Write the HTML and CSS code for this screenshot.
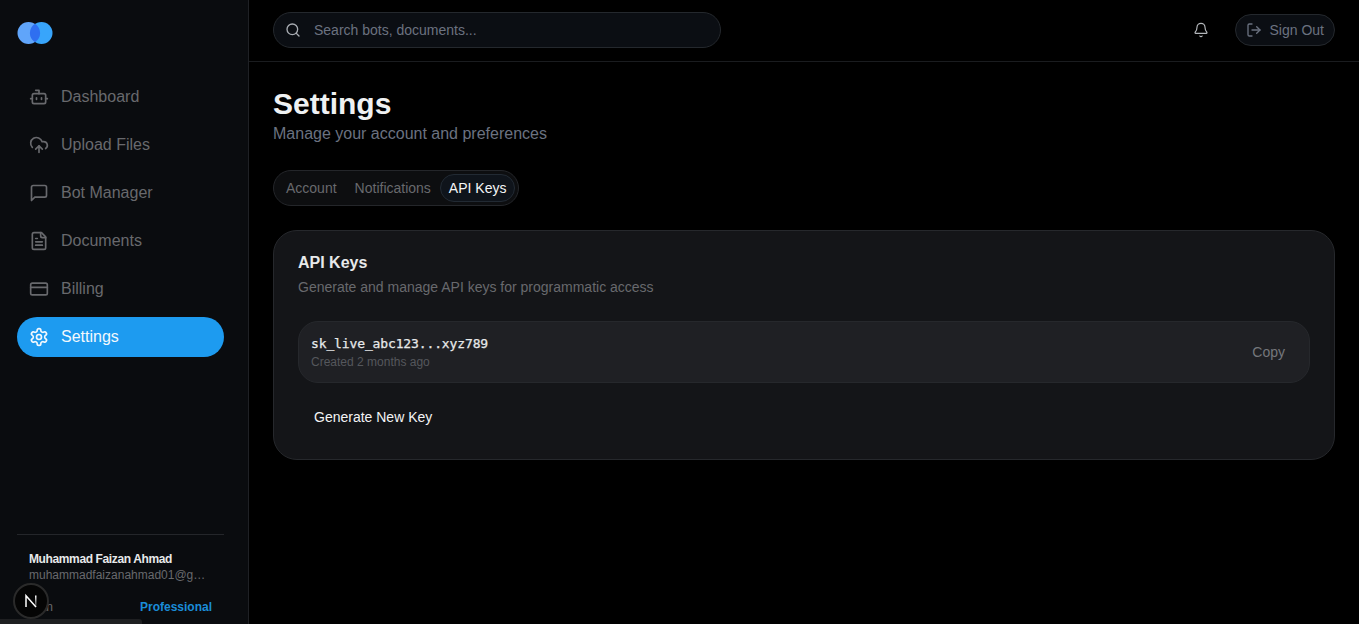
FILE: index.html
```html
<!DOCTYPE html>
<html lang="en">
<head>
<meta charset="utf-8">
<title>Settings</title>
<link rel="stylesheet" href="styles.css">
</head>
<body>
<div class="app">
  <aside class="sidebar">
    <div class="logo">
      <svg width="36" height="24" viewBox="0 0 36 24"><circle cx="11.5" cy="12" r="11" fill="#60a5fa"/><circle cx="24.5" cy="12" r="11" fill="#38a5fb"/><path d="M18 2.7a11 11 0 0 1 0 18.6a11 11 0 0 1 0-18.6z" fill="#2f6ff0"/></svg>
    </div>
    <nav class="nav">
      <a class="nav-item"><svg class="ico" viewBox="0 0 24 24"><path d="M12 8V4H8"/><rect x="4" y="8" width="16" height="12" rx="2"/><path d="M2 14h2"/><path d="M20 14h2"/><path d="M15 13v2"/><path d="M9 13v2"/></svg>Dashboard</a>
      <a class="nav-item"><svg class="ico" viewBox="0 0 24 24"><path d="M12 13v8"/><path d="M4 14.9A7 7 0 1 1 15.71 8h1.79a4.5 4.5 0 0 1 2.5 8.24"/><path d="m8 17 4-4 4 4"/></svg>Upload Files</a>
      <a class="nav-item"><svg class="ico" viewBox="0 0 24 24"><path d="M21 15a2 2 0 0 1-2 2H7l-4 4V5a2 2 0 0 1 2-2h14a2 2 0 0 1 2 2z"/></svg>Bot Manager</a>
      <a class="nav-item"><svg class="ico" viewBox="0 0 24 24"><path d="M15 2H6a2 2 0 0 0-2 2v16a2 2 0 0 0 2 2h12a2 2 0 0 0 2-2V7Z"/><path d="M14 2v4a2 2 0 0 0 2 2h4"/><path d="M10 9H8"/><path d="M16 13H8"/><path d="M16 17H8"/></svg>Documents</a>
      <a class="nav-item"><svg class="ico" viewBox="0 0 24 24"><rect x="2" y="5" width="20" height="14" rx="2"/><path d="M2 10h20"/></svg>Billing</a>
      <a class="nav-item active"><svg class="ico" viewBox="0 0 24 24"><path d="M12.22 2h-.44a2 2 0 0 0-2 2v.18a2 2 0 0 1-1 1.73l-.43.25a2 2 0 0 1-2 0l-.15-.08a2 2 0 0 0-2.73.73l-.22.38a2 2 0 0 0 .73 2.73l.15.1a2 2 0 0 1 1 1.72v.51a2 2 0 0 1-1 1.74l-.15.09a2 2 0 0 0-.73 2.73l.22.38a2 2 0 0 0 2.73.73l.15-.08a2 2 0 0 1 2 0l.43.25a2 2 0 0 1 1 1.73V20a2 2 0 0 0 2 2h.44a2 2 0 0 0 2-2v-.18a2 2 0 0 1 1-1.73l.43-.25a2 2 0 0 1 2 0l.15.08a2 2 0 0 0 2.73-.73l.22-.39a2 2 0 0 0-.73-2.73l-.15-.08a2 2 0 0 1-1-1.74v-.5a2 2 0 0 1 1-1.74l.15-.09a2 2 0 0 0 .73-2.73l-.22-.38a2 2 0 0 0-2.73-.73l-.15.08a2 2 0 0 1-2 0l-.43-.25a2 2 0 0 1-1-1.73V4a2 2 0 0 0-2-2z"/><circle cx="12" cy="12" r="3"/></svg>Settings</a>
    </nav>
    <div class="user">
      <div class="user-name">Muhammad Faizan Ahmad</div>
      <div class="user-email">muhammadfaizanahmad01@gmail.com</div>
      <div class="user-plan"><span>Plan</span><span class="plan-name">Professional</span></div>
    </div>
  </aside>
  <div class="content">
    <header class="topbar">
      <div class="search">
        <svg class="search-ico" viewBox="0 0 24 24"><circle cx="11" cy="11" r="8"/><path d="m21 21-4.3-4.3"/></svg>
        <span>Search bots, documents...</span>
      </div>
      <div class="top-actions">
        <svg class="bell" viewBox="0 0 24 24"><path d="M10.27 21a2 2 0 0 0 3.46 0"/><path d="M3.26 15.33A1 1 0 0 0 4 17h16a1 1 0 0 0 .74-1.67C19.41 13.96 18 12.5 18 8A6 6 0 0 0 6 8c0 4.5-1.41 5.96-2.74 7.33"/></svg>
        <button class="signout"><svg class="out-ico" viewBox="0 0 24 24"><path d="M9 21H5a2 2 0 0 1-2-2V5a2 2 0 0 1 2-2h4"/><path d="m16 17 5-5-5-5"/><path d="M21 12H9"/></svg>Sign Out</button>
      </div>
    </header>
    <main class="main">
      <h1 class="title">Settings</h1>
      <p class="subtitle">Manage your account and preferences</p>
      <div class="tabs">
        <span class="tab">Account</span>
        <span class="tab">Notifications</span>
        <span class="tab tab-active">API Keys</span>
      </div>
      <section class="card">
        <h2 class="card-title">API Keys</h2>
        <p class="card-desc">Generate and manage API keys for programmatic access</p>
        <div class="key-row">
          <div class="key-info">
            <code class="key">sk_live_abc123...xyz789</code>
            <span class="key-date">Created 2 months ago</span>
          </div>
          <button class="copy">Copy</button>
        </div>
        <button class="generate">Generate New Key</button>
      </section>
    </main>
  </div>
</div>
<div class="next-badge">
  <svg width="16" height="16" viewBox="0 0 16 16"><defs><linearGradient id="fade" x1="0" y1="0" x2="0" y2="1"><stop offset="0" stop-color="#fff"/><stop offset="1" stop-color="#fff" stop-opacity="0.15"/></linearGradient></defs><path d="M3 14V2.7L13 14" fill="none" stroke="#fff" stroke-width="1.5"/><rect x="12" y="2.5" width="1.5" height="11.5" fill="url(#fade)"/></svg>
</div>
<div class="scrollbar"></div>
</body>
</html>
```
FILE: styles.css
```css
* { box-sizing: border-box; }
html, body { margin: 0; height: 100%; overflow: hidden; }
body { background: #000; font-family: "Liberation Sans", Arial, sans-serif; color: #fff; }
button { font-family: inherit; cursor: pointer; }

.app { display: flex; height: 624px; }

.sidebar {
  width: 249px;
  flex: none;
  display: flex;
  flex-direction: column;
  background: #0a0c0f;
  border-right: 1px solid #1f2125;
  padding: 0 24px 0 17px;
}
.logo { height: 68px; padding-top: 21px; display: flex; align-items: flex-start; }
.nav { display: flex; flex-direction: column; gap: 8px; margin-top: 9px; flex: 1; }
.nav-item {
  display: flex;
  align-items: center;
  gap: 12px;
  height: 40px;
  padding-left: 12px;
  border-radius: 20px;
  font-size: 16px;
  color: #68696d;
}
.nav-item.active { background: #1d9bf0; color: #f2f8fd; }
.ico { width: 20px; height: 20px; flex: none; fill: none; stroke: currentColor; stroke-width: 2; stroke-linecap: round; stroke-linejoin: round; }

.user { border-top: 1px solid #24262a; height: 90px; padding: 17px 12px 0; font-size: 12px; }
.user-name { font-weight: 700; color: #e7e9ea; line-height: 15px; letter-spacing: -0.38px; }
.user-email { color: #68696d; line-height: 17px; overflow: hidden; white-space: nowrap; text-overflow: ellipsis; }
.user-plan { display: flex; justify-content: space-between; color: #68696d; line-height: 16px; margin-top: 15px; }
.plan-name { color: #1a8cd8; font-weight: 700; }

.content { flex: 1; min-width: 0; display: flex; flex-direction: column; }
.topbar {
  height: 62px;
  flex: none;
  display: flex;
  align-items: center;
  justify-content: space-between;
  padding: 0 24px 1px;
  border-bottom: 1px solid #1a1c1f;
}
.search {
  width: 448px;
  height: 36px;
  display: flex;
  align-items: center;
  gap: 12px;
  padding-left: 11px;
  border: 1px solid #24282d;
  border-radius: 18px;
  background: #0b0e13;
  font-size: 14px;
  color: #6b7280;
}
.search-ico { width: 16px; height: 16px; flex: none; margin-right: 1px; fill: none; stroke: #a9adb3; stroke-width: 2; stroke-linecap: round; stroke-linejoin: round; }
.top-actions { display: flex; align-items: center; gap: 26px; }
.bell { width: 16px; height: 16px; fill: none; stroke: #b4b7bb; stroke-width: 1.75; stroke-linecap: round; stroke-linejoin: round; }
.signout {
  width: 100px;
  height: 32px;
  display: flex;
  align-items: center;
  gap: 7.5px;
  padding: 0 0 0 10px;
  border: 1px solid #24282d;
  border-radius: 16px;
  background: #0b0e13;
  font-size: 14px;
  color: #6b7280;
}
.out-ico { width: 16px; height: 16px; flex: none; fill: none; stroke: currentColor; stroke-width: 2; stroke-linecap: round; stroke-linejoin: round; }

.main { padding: 24px; }
.title { margin: 0; font-size: 30px; line-height: 36px; font-weight: 700; color: #eff1f2; }
.subtitle { margin: 0; font-size: 16px; line-height: 24px; color: #6b7280; }

.tabs {
  display: inline-flex;
  margin-top: 24px;
  height: 36px;
  padding: 3px;
  border: 1px solid #24262a;
  border-radius: 18px;
  background: #0d0e10;
  vertical-align: top;
}
.tab {
  display: flex;
  align-items: center;
  padding: 0 8px;
  border: 1px solid transparent;
  border-radius: 14px;
  font-size: 14px;
  color: #68696d;
}
.tab-active { background: #0f141b; border-color: #222a33; color: #f5f6f7; }

.card {
  display: block;
  height: 230px;
  margin-top: 24px;
  padding: 24px;
  border: 1px solid #26282c;
  border-radius: 24px;
  background: #141518;
}
.card-title { margin: 0; font-size: 16px; line-height: 16px; font-weight: 700; color: #e7e9ea; }
.card-desc { margin: 6px 0 0; font-size: 14px; line-height: 20px; color: #68696d; }
.key-row {
  display: flex;
  align-items: center;
  justify-content: space-between;
  height: 62px;
  margin-top: 24px;
  padding: 0 8px 0 12px;
  border: 1px solid #26282c;
  border-radius: 20px;
  background: #1f2024;
}
.key-info { display: flex; flex-direction: column; }
.key { font-family: "DejaVu Sans Mono", monospace; font-size: 13px; font-weight: 400; letter-spacing: -0.13px; -webkit-text-stroke: 0.25px #e7e9ea; line-height: 20px; color: #e7e9ea; }
.key-date { font-size: 12px; line-height: 16px; color: #55575c; }
.copy {
  height: 36px;
  padding: 0 16px;
  border: 0;
  background: transparent;
  font-size: 14px;
  color: #75777c;
}
.generate {
  display: block;
  height: 36px;
  margin-top: 16px;
  padding: 0 16px;
  border: 0;
  background: transparent;
  font-size: 14px;
  color: #f2f3f4;
}

.next-badge {
  position: fixed;
  left: 13px;
  top: 583px;
  width: 36px;
  height: 36px;
  display: flex;
  align-items: center;
  justify-content: center;
  border-radius: 50%;
  background: #050505;
  border: 2px solid #2a2a2a;
}
.scrollbar {
  position: fixed;
  left: 0;
  bottom: 0;
  width: 142px;
  height: 5px;
  background: #1e1f21;
  border-radius: 0 3px 0 0;
}
```
